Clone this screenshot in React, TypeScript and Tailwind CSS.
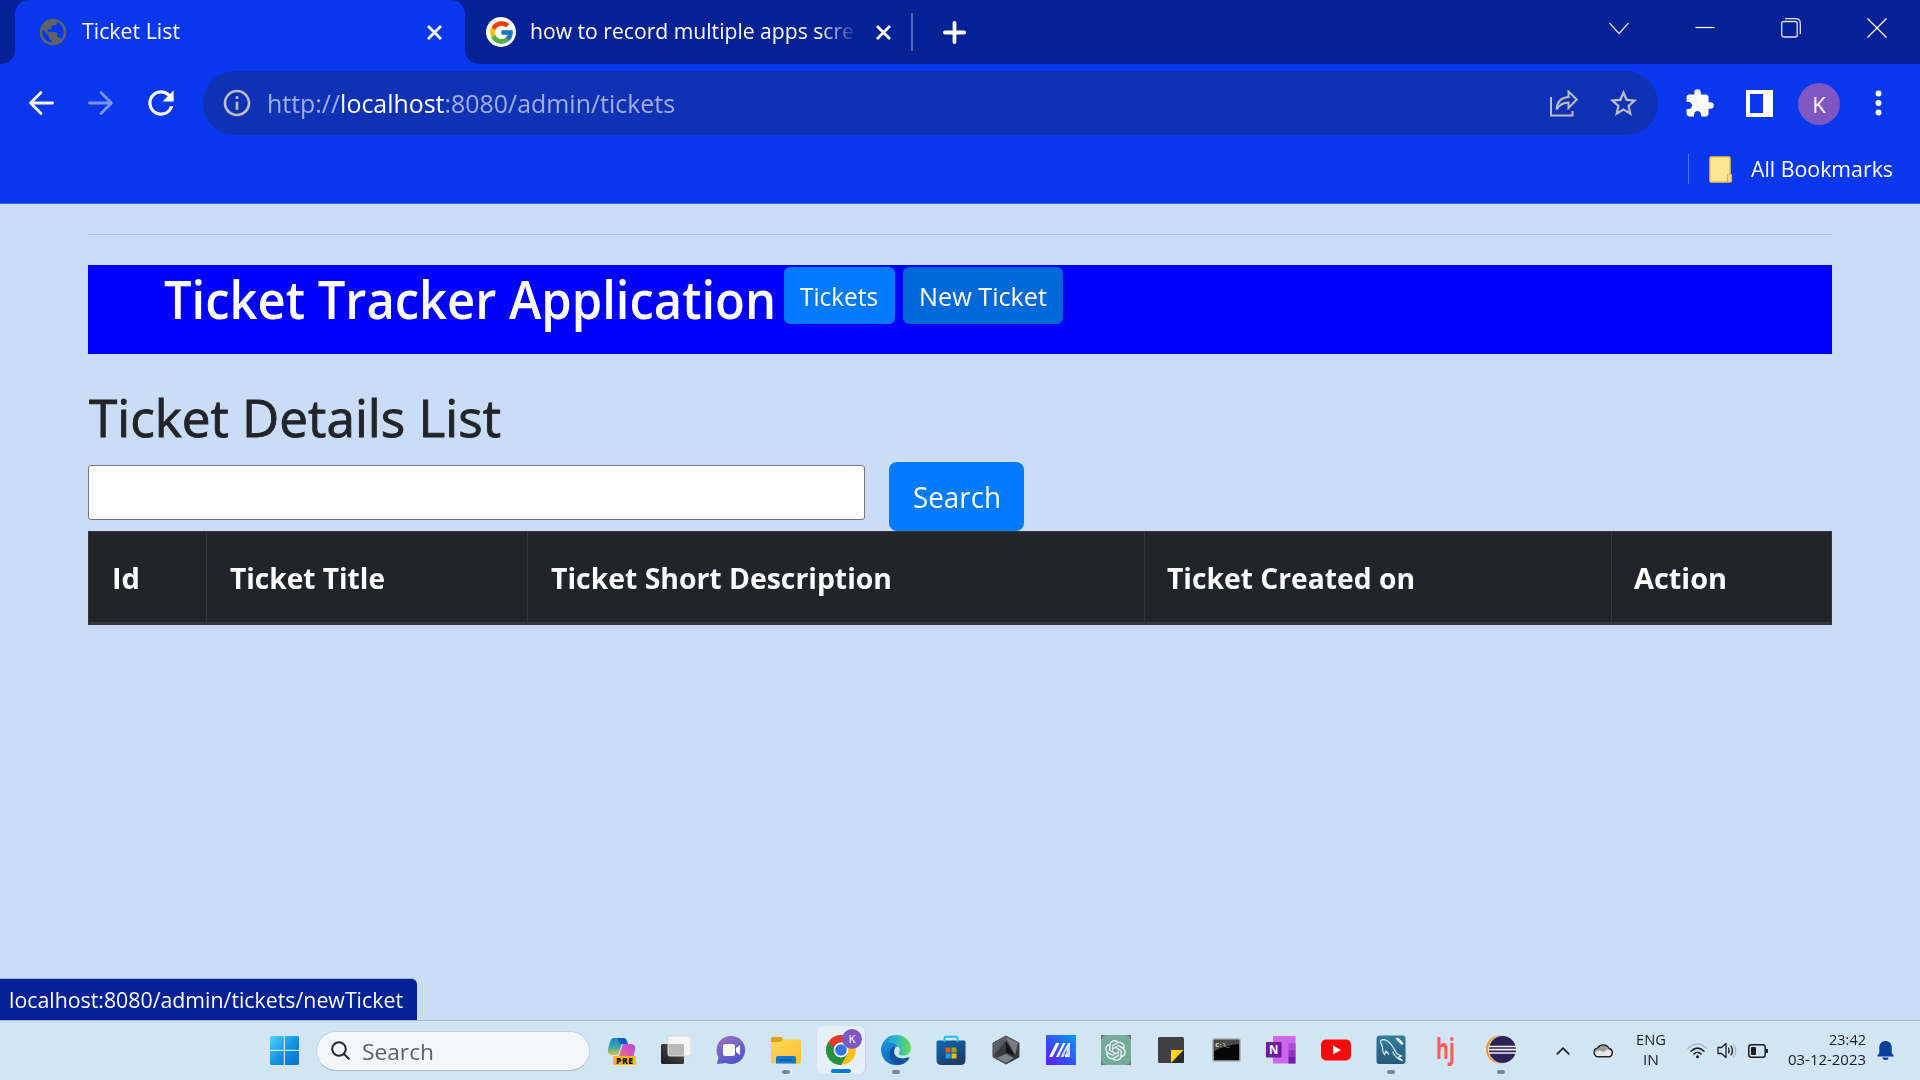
import { useLayoutEffect, useRef, type ReactNode } from "react";
import { MdExtension, MdOutlineInfo, MdPublic, MdRefresh, MdStarBorder } from "react-icons/md";
import { FcGoogle } from "react-icons/fc";
import { RiOpenaiFill } from "react-icons/ri";

/** A single line of text condensed or widened horizontally to fill `w` pixels. */
function Line({ w, className = "", children }: { w: number; className?: string; children: ReactNode }) {
  const ref = useRef<HTMLSpanElement>(null);
  useLayoutEffect(() => {
    const el = ref.current;
    if (!el) return;
    el.style.transform = "none";
    const natural = el.getBoundingClientRect().width;
    if (natural > 0) el.style.transform = `scaleX(${w / natural})`;
  }, [w]);
  return (
    <span className={`block shrink-0 whitespace-nowrap ${className}`} style={{ width: w }}>
      <span ref={ref} className="inline-block origin-left">
        {children}
      </span>
    </span>
  );
}

function CloseX() {
  return (
    <svg className="size-[15px] shrink-0" viewBox="0 0 15 15" stroke="#fff" strokeWidth="2.8">
      <path d="M1 1l13 13M14 1L1 14" />
    </svg>
  );
}

function TabStrip() {
  return (
    <div className="flex h-16 bg-[#0837ee] text-[22px] leading-[30px] text-white">
      <div className="w-[15px] rounded-br-[14px] bg-[#052196]" />
      <div className="w-[450px] bg-[#052196]">
        <div className="flex h-16 items-center rounded-t-[14px] bg-[#0837ee] pl-[22px]">
          <MdPublic className="size-8 text-[#5f6368]" />
          <Line w={98} className="-mt-[5px] ml-[13px]">Ticket List</Line>
          <div className="ml-[247px] flex"><CloseX /></div>
        </div>
      </div>
      <div className="flex flex-1 items-center rounded-bl-[14px] bg-[#052196] pl-[21px]">
        <div className="flex size-[30px] items-center justify-center rounded-full bg-white">
          <FcGoogle className="size-[27px]" />
        </div>
        <div className="-mt-[5px] ml-[14px] w-[325px] [mask-image:linear-gradient(to_right,#000_89%,transparent_101%)]">
          <Line w={324}>how to record multiple apps scre</Line>
        </div>
        <div className="ml-[21px] flex"><CloseX /></div>
        <div className="ml-5 h-[38px] w-0.5 bg-[#5468b8]" />
        <svg className="ml-[30px] size-[23px]" viewBox="0 0 22 22" stroke="#fff" strokeWidth="3.600" strokeLinecap="round">
          <path d="M11 1.800v18.400M1.800 11h18.400" />
        </svg>
        <div className="ml-auto flex h-full pb-[9px]">
          <div className="flex w-[86px] items-center justify-center">
            <svg className="size-5" viewBox="0 0 20 20" fill="none" stroke="#dfe4f5" strokeWidth="1.2"><path d="M.5 5l9.5 10.500L19.500 5" /></svg>
          </div>
          <div className="flex w-[86px] items-center justify-center">
            <svg className="size-5" viewBox="0 0 20 20" stroke="#fff" strokeWidth="1.2"><path d="M.5 9.500h19" /></svg>
          </div>
          <div className="flex w-[86px] items-center justify-center">
            <svg className="size-5" viewBox="0 0 20 20" fill="none" stroke="#dfe4f5" strokeWidth="1.3">
              <rect x=".7" y="3.500" width="15.500" height="15.500" rx="2" />
              <path d="M4 .7h10.500q4.800 0 4.800 4.800v10.500" />
            </svg>
          </div>
          <div className="flex w-[86px] items-center justify-center">
            <svg className="size-5" viewBox="0 0 20 20" stroke="#fff" strokeWidth="1.2"><path d="M.5.5l19 19M19.500.5l-19 19" /></svg>
          </div>
        </div>
      </div>
    </div>
  );
}

function Toolbar() {
  return (
    <div className="flex h-[78px] items-center bg-[#0837ee]">
      <svg className="ml-[28px] size-[26px]" viewBox="0 0 26 26" fill="none" stroke="#fff" strokeWidth="2.800" strokeLinecap="round" strokeLinejoin="round">
        <path d="M24.500 13H2.500M13 2.500L2.500 13 13 23.500" />
      </svg>
      <svg className="ml-[34px] size-[26px]" viewBox="0 0 26 26" fill="none" stroke="#7c93f6" strokeWidth="2.800" strokeLinecap="round" strokeLinejoin="round">
        <path d="M1.500 13h22M13 2.500L23.500 13 13 23.500" />
      </svg>
      <MdRefresh className="ml-7 size-[38px] text-white" />
      <div className="ml-[23px] flex h-16 w-[1455px] items-center rounded-full bg-[#0f32b4] pr-[18px] pl-[18px]">
        <MdOutlineInfo className="size-8 text-[#bcbdc2]" />
        <Line w={408} className="ml-3.5 text-[25px] leading-[34px] text-[#a0aee4]">
          http://<span className="text-white">localhost</span>:8080/admin/tickets
        </Line>
        <svg className="ml-auto h-[28px] w-[30px]" viewBox="0 0 30 28" fill="none" stroke="#bcbdc2" strokeWidth="2">
          <path d="M2 8v18.500h21.500V22" />
          <path d="M7.500 20.500C8 13 12 8.500 19.500 8V2.500l8.300 8-8.300 8.500v-5.500C14 13.500 10.500 15.500 7.500 20.500z" />
        </svg>
        <MdStarBorder className="ml-7 size-[33px] text-[#bcbdc2]" />
      </div>
      <MdExtension className="ml-[26px] size-[31px] text-white" />
      <svg className="ml-[31px] size-[27px]" viewBox="0 0 27 27"><path fill="#fff" fillRule="evenodd" d="M0 0h27v27H0zM4 4v19h13V4z" /></svg>
      <div className="mt-0.5 ml-[25px] flex size-[42px] items-center justify-center rounded-full bg-[#7e57c2] text-[22px] leading-none text-white">K</div>
      <svg className="ml-[35px] h-[26px] w-[7px]" viewBox="0 0 7 26" fill="#fff">
        <circle cx="3.500" cy="3.500" r="3" /><circle cx="3.500" cy="13" r="3" /><circle cx="3.500" cy="22.500" r="3" />
      </svg>
    </div>
  );
}

function BookmarksBar() {
  return (
    <div className="flex h-[62px] items-center justify-end border-b border-[#3c63f2] bg-[#0837ee] pr-[27px] pb-[7px]">
      <div className="h-[30px] w-px bg-[#5274f4]" />
      <svg className="ml-5 h-[27px] w-6" viewBox="0 0 24 27">
        <rect x="1" y="1" width="20" height="25" rx="1" fill="#ffe694" stroke="#f6c842" strokeWidth="1.500" />
        <rect x="18.500" y="18" width="4" height="8" rx="1" fill="#ffe082" stroke="#e5b32c" strokeWidth="1.200" />
      </svg>
      <Line w={142} className="-mt-0.5 ml-[18px] text-[22px] leading-[30px] text-white">All Bookmarks</Line>
    </div>
  );
}

function TicketsPage() {
  const th = "border-l border-[#32383e] first:border-l-0";
  return (
    <main className="flex-1 bg-[#cbdcf6] px-[88px] pt-[30px] text-[#212529]">
      <hr className="h-0 border-0 border-t border-[#b2c2e0]" />
      <div className="mt-[30px] flex h-[89px] items-start bg-[#0000ff] pl-[76px] text-white">
        <Line w={612} className="pt-0.5 text-[53px] leading-[64px] font-semibold">Ticket Tracker Application</Line>
        <button className="mt-0.5 ml-2 flex h-[57px] w-[111px] justify-center rounded-md bg-[#007bff] pt-[11px] pr-px text-[25px] leading-[36px]">
          <Line w={78}>Tickets</Line>
        </button>
        <button className="mt-0.5 ml-2 flex h-[57px] w-[160px] justify-center rounded-md border border-[#0062cc] bg-[#0069d9] pt-[10px] pr-0.5 text-[25px] leading-[36px]">
          <Line w={128}>New Ticket</Line>
        </button>
      </div>
      <h1 className="mt-[31px] h-[77px]">
        <Line w={412} className="ml-px text-[52px] leading-[64px] [-webkit-text-stroke:0.9px_#212529]">Ticket Details List</Line>
      </h1>
      <div className="flex h-[69px] items-start">
        <input className="mt-[3px] h-[55px] w-[777px] rounded-[3px] border border-[#767676] bg-white" />
        <button className="ml-6 flex h-[69px] w-[135px] justify-center rounded-lg bg-[#007bff] pt-[15px] text-[29px] leading-[40px] text-white">
          <Line w={88}>Search</Line>
        </button>
      </div>
      <table className="h-[94px] w-[1744px] table-fixed border-separate border-spacing-0 border border-b-[3px] border-[#32383e] bg-[#212529] text-left text-[28.5px] leading-[40px] text-white">
        <thead>
          <tr>
            <th className={`w-[117px] pt-0.5 pl-[23px] ${th}`}><Line w={28}>Id</Line></th>
            <th className={`w-[321px] pt-0.5 pl-[23px] ${th}`}><Line w={155}>Ticket Title</Line></th>
            <th className={`w-[617px] pt-0.5 pl-[23px] ${th}`}><Line w={341}>Ticket Short Description</Line></th>
            <th className={`w-[467px] pt-0.5 pl-[22px] ${th}`}><Line w={248}>Ticket Created on</Line></th>
            <th className={`pt-0.5 pl-[22px] ${th}`}><Line w={93}>Action</Line></th>
          </tr>
        </thead>
      </table>
    </main>
  );
}

function Copilot() {
  return (
    <svg className="size-[30px]" viewBox="0 0 30 30">
      <defs>
        <linearGradient id="cpA" x1="0" y1="0" x2="0" y2="1"><stop stopColor="#1589c9" /><stop offset=".5" stopColor="#35a5ad" /><stop offset="1" stopColor="#d6c848" /></linearGradient>
        <linearGradient id="cpB" x1="1" y1="0" x2="0" y2="1"><stop stopColor="#a44bea" /><stop offset=".5" stopColor="#d656b6" /><stop offset="1" stopColor="#f58a4b" /></linearGradient>
      </defs>
      <path d="M8 3h10l-6 17H6q-5 0-4-6l2-7q1-4 4-4z" fill="url(#cpA)" />
      <path d="M11 3h7q2 0 3 3l1 3h-6q-3 0-3-2z" fill="#1757c9" />
      <path d="M17 9h8q5 0 4 6l-2 9H12z" fill="url(#cpB)" />
      <rect x="7" y="21" width="23" height="9" rx="1.500" fill="#fdb90b" />
      <text x="10" y="28.500" fontSize="8.500" fontWeight="800" fontFamily="Open Sans, sans-serif" fill="#111" textLength="17">PRE</text>
    </svg>
  );
}

function TaskView() {
  return (
    <svg className="size-[30px]" viewBox="0 0 30 30">
      <defs><linearGradient id="tvA" x1="1" y1="0" x2="0" y2="1"><stop stopColor="#555" /><stop offset="1" stopColor="#1c1c1c" /></linearGradient></defs>
      <rect x="0" y="9" width="23" height="20" rx="1.500" fill="url(#tvA)" />
      <rect x="7" y="1" width="23" height="20" rx="1.500" fill="#f5f5f5" stroke="#d7d7d7" />
      <path d="M7.500 9H23v11.500H7.500z" fill="#b9b9b9" />
    </svg>
  );
}

function Chat() {
  return (
    <svg className="size-[30px]" viewBox="0 0 30 30">
      <defs><linearGradient id="chA" x1="0" y1="0" x2=".4" y2="1"><stop stopColor="#a070b4" /><stop offset=".5" stopColor="#7466cc" /><stop offset="1" stopColor="#5257c6" /></linearGradient></defs>
      <path d="M15 1a14 14 0 1 1-5 27L1 29l1.500-7A14 14 0 0 1 15 1z" fill="url(#chA)" />
      <rect x="7" y="9" width="12" height="12" rx="2" fill="#fff" />
      <path d="M20 13l4-3v10l-4-3z" fill="#fff" />
    </svg>
  );
}

function Folder() {
  return (
    <svg className="size-[30px]" viewBox="0 0 30 30">
      <defs><linearGradient id="foA" x1="0" y1="0" x2="1" y2="1"><stop stopColor="#ffd75e" /><stop offset="1" stopColor="#fdc02f" /></linearGradient></defs>
      <path d="M0 3.500Q0 2 1.500 2H10l3 3h15.500L30 7v4H0z" fill="#e09f11" />
      <path d="M0 7h9l3-2.500h16.500Q30 4.500 30 6v21q0 1.500-1.500 1.500h-27Q0 28.500 0 27z" fill="url(#foA)" />
      <path d="M5 28.500V23q0-2 2-2h16q2 0 2 2v5.500z" fill="#0f78d0" />
      <path d="M9 25h12" stroke="#0a4e96" strokeWidth="1.200" />
    </svg>
  );
}

function Chrome() {
  return (
    <svg className="h-[36px] w-[37px] overflow-visible" viewBox="0 0 37 36">
      <g transform="translate(0 6)">
        <circle cx="15" cy="15" r="15" fill="#fbc116" />
        <path d="M15 15L2 7.500A15 15 0 0 0 15 30l6.500-11.250z" fill="#229342" />
        <path d="M2 7.500A15 15 0 0 1 28 7.500H15L8.500 18.750z" fill="#e33b2e" />
        <path d="M2 7.500L8.500 18.750 12 16z" fill="#229342" />
        <circle cx="15" cy="15" r="7.400" fill="#fff" />
        <circle cx="15" cy="15" r="5.800" fill="#2f74e8" />
      </g>
      <circle cx="26" cy="10" r="10" fill="#7e57c2" />
      <text x="26" y="14" textAnchor="middle" fontSize="11" fill="#e4dcf3" fontFamily="Open Sans, sans-serif" fontWeight="600">K</text>
    </svg>
  );
}

function Edge() {
  return (
    <svg className="size-[30px]" viewBox="0 0 30 30">
      <defs>
        <linearGradient id="edA" x1="0" y1=".3" x2="1" y2=".3"><stop stopColor="#1c84d4" /><stop offset=".45" stopColor="#28b0d4" /><stop offset="1" stopColor="#68df52" /></linearGradient>
        <linearGradient id="edB" x1="0" y1="0" x2=".7" y2="1"><stop stopColor="#1793dc" /><stop offset="1" stopColor="#0d62b8" /></linearGradient>
      </defs>
      <path d="M0 14C1 6 7 0 15 0c9 0 15 6.500 15 13 0 5-4 7.500-8 7.500-3 0-5-1-4-2.500 2-3 .5-7-4-7.500C8 10 1 10 0 14z" fill="url(#edA)" />
      <path d="M0 14c1-5 5-7 10-6 4 .7 7 3 7 4-4-1-7 2-7 6 0 6 5 10 11 10-2 1.500-4 2-6 2C6 30 0 23 0 14z" fill="url(#edB)" />
      <path d="M12 12c-5 4-5 13 3 17.500C21 31 26 27.500 28.300 23c.4-.8-.3-1-1-.7-6 2.500-13 .7-14-4.300-.5-2.500.3-4.500 1.500-6z" fill="#14539f" />
    </svg>
  );
}

function Store() {
  return (
    <svg className="size-[30px]" viewBox="0 0 30 30">
      <defs><linearGradient id="stA" x1="0" y1="0" x2=".6" y2="1"><stop stopColor="#0d68b4" /><stop offset="1" stopColor="#213a68" /></linearGradient></defs>
      <path d="M.5 7Q.5 5.500 2 5.500h26q1.500 0 1.500 1.500v18q0 5-5 5h-19q-5 0-5-5z" fill="url(#stA)" />
      <path d="M8.500 7V3q0-1.300 1.300-1.300h10.400q1.300 0 1.300 1.300v4" fill="none" stroke="#2abcf0" strokeWidth="2" />
      <rect x="9.500" y="12.500" width="5" height="5" fill="#f1511b" /><rect x="15.500" y="12.500" width="5" height="5" fill="#80bb03" />
      <rect x="9.500" y="18.500" width="5" height="5" fill="#12a4ee" /><rect x="15.500" y="18.500" width="5" height="5" fill="#fcb908" />
    </svg>
  );
}

function ArmouryCrate() {
  return (
    <svg className="size-[30px]" viewBox="0 0 30 30">
      <defs><linearGradient id="acA" x1="0" y1="0" x2="1" y2="1"><stop stopColor="#6c7278" /><stop offset="1" stopColor="#24282c" /></linearGradient></defs>
      <path d="M15 1l13 7v14l-13 7-13-7V8z" fill="url(#acA)" stroke="#41474c" />
      <path d="M15 6l9 15-9-3.500L6 22z" fill="#15181b" />
      <path d="M15 6L3 20l3 3 9-6z" fill="#363b40" />
      <path d="M15 2l12 6-3 12z" fill="#8d9499" opacity=".7" />
      <path d="M6 23l9-4 8 4-8 5z" fill="#7b8288" />
    </svg>
  );
}

function MyAsus() {
  return (
    <svg className="size-[30px]" viewBox="0 0 30 30">
      <defs><linearGradient id="maA" x1="1" y1="0" x2="0" y2="1"><stop stopColor="#079bff" /><stop offset=".6" stopColor="#3b49fb" /><stop offset="1" stopColor="#6a17f5" /></linearGradient></defs>
      <path d="M0 0h30v30H0z" fill="url(#maA)" />
      <path d="M3 22L10 8h3.500l-7 14zM10 22l7-14h2.500l-7 14z" fill="#fff" />
      <path d="M14.500 22l7.500-14h2v14h-3.500v-8L17.500 22z" fill="#d6dcff" />
      <circle cx="20.500" cy="20.500" r="1.700" fill="#fff" />
    </svg>
  );
}

function ChatGpt() {
  return (
    <div className="flex size-[30px] items-center justify-center bg-[#77736f]">
      <div className="flex size-[30px] items-center justify-center rounded-md bg-[#74a99b]"><RiOpenaiFill className="size-[25px] text-[#eef6f3]" /></div>
    </div>
  );
}

function StickyNotes() {
  return (
    <svg className="size-[30px]" viewBox="0 0 30 30">
      <path d="M2 3.500Q2 2 3.500 2h23Q28 2 28 3.500V28H3.500Q2 28 2 26.500z" fill="#414141" />
      <path d="M15 28V15h13v11.500q0 1.500-1.500 1.500z" fill="#2b2b2b" /><path d="M15 28V15h12.500z" fill="#ffd60a" />
    </svg>
  );
}

function Terminal() {
  return (
    <svg className="size-[30px]" viewBox="0 0 30 30">
      <rect x="2" y="4" width="27" height="22" rx="1" fill="#070707" stroke="#a9adb0" strokeWidth="1.500" />
      <path d="M3 5h25v4Q15 10 3 16z" fill="#4b4b4b" />
      <text x="4.500" y="12" fontSize="6" fontWeight="700" fill="#e8e8e8" fontFamily="Liberation Mono, monospace">C:\_</text>
    </svg>
  );
}

function OneNote() {
  return (
    <svg className="size-[30px]" viewBox="0 0 30 30">
      <path d="M7 1h22.500v27.500H7z" fill="#cb67e8" />
      <path d="M22.500 8H29.500v7h-7z" fill="#ae4bd5" /><path d="M22.500 15H29.500v7h-7z" fill="#9332bf" /><path d="M22.500 22H29.500v6.500h-7z" fill="#7719aa" />
      <rect x="0" y="7" width="15.500" height="15.500" rx="1" fill="#6f1aa3" />
      <text x="7.700" y="18.800" textAnchor="middle" fontSize="11.500" fontWeight="700" fill="#fff" fontFamily="Open Sans, sans-serif">N</text>
    </svg>
  );
}

function YouTube() {
  return (
    <svg className="size-[30px]" viewBox="0 0 30 30">
      <rect x="0" y="4.500" width="30" height="21" rx="5" fill="#f90a0a" /><path d="M12 10.500l8 4.500-8 4.500z" fill="#fff" />
    </svg>
  );
}

function Workbench() {
  return (
    <svg className="size-[30px]" viewBox="0 0 30 30">
      <defs><linearGradient id="wbA" x1="0" y1="0" x2="0" y2="1"><stop stopColor="#347ba0" /><stop offset="1" stopColor="#255a78" /></linearGradient></defs>
      <rect x=".5" y=".5" width="29" height="28.500" rx="3" fill="url(#wbA)" />
      <path d="M4.500 5.500C9 3 14 7 17 12c1.500 3 3 6 5 7.500l3.500 1.500-3 1 3.500 3.500c-5-1-8-6-9.500-9M4.500 5.500c0 3 2 5 2 8s1 5 2 6l1.500-3.500 3 3.500" fill="none" stroke="#e1ebf0" strokeWidth="1.200" />
      <path d="M21.500 4l4.500 4.500" stroke="#fff" strokeWidth="2.500" strokeLinecap="round" />
    </svg>
  );
}

function Hj() {
  return (
    <svg className="size-[30px] overflow-visible" viewBox="0 0 30 30">
      <text x="5" y="23.500" fontSize="29" fontWeight="700" fill="#fb5b60" fontFamily="Open Sans, sans-serif" textLength="19" lengthAdjust="spacingAndGlyphs">hj</text>
    </svg>
  );
}

function Eclipse() {
  return (
    <svg className="size-[30px]" viewBox="0 0 30 30">
      <circle cx="14" cy="14.500" r="14" fill="#f7941e" /><circle cx="16.200" cy="14.500" r="14" fill="#d2e5f3" /><circle cx="16.500" cy="14.500" r="13.500" fill="#2c2255" />
      <path d="M3 11.500h27M2.500 14.700h27.500M3 18h27" stroke="#f1eff7" strokeWidth="1.700" />
    </svg>
  );
}

const apps: { name: string; icon: ReactNode; running?: boolean; active?: boolean }[] = [
  { name: "Copilot", icon: <Copilot /> },
  { name: "Task View", icon: <TaskView /> },
  { name: "Chat", icon: <Chat /> },
  { name: "File Explorer", icon: <Folder />, running: true },
  { name: "Chrome", icon: <Chrome />, active: true },
  { name: "Edge", icon: <Edge />, running: true },
  { name: "Store", icon: <Store /> },
  { name: "Armoury Crate", icon: <ArmouryCrate /> },
  { name: "MyASUS", icon: <MyAsus /> },
  { name: "ChatGPT", icon: <ChatGpt /> },
  { name: "Sticky Notes", icon: <StickyNotes /> },
  { name: "Terminal", icon: <Terminal /> },
  { name: "OneNote", icon: <OneNote /> },
  { name: "YouTube", icon: <YouTube /> },
  { name: "Workbench", icon: <Workbench />, running: true },
  { name: "Hotjar", icon: <Hj /> },
  { name: "Eclipse", icon: <Eclipse />, running: true },
];

function Taskbar() {
  return (
    <footer className="flex h-[60px] items-center border-t border-[#a8b5c6] bg-[#d2e5f3] pl-[270px] text-[#1b1f24]">
      <svg className="size-[29px]" viewBox="0 0 29 29">
        <defs><linearGradient id="winA" gradientUnits="userSpaceOnUse" x1="0" y1="0" x2="29" y2="29"><stop stopColor="#4fd2ff" /><stop offset=".55" stopColor="#1290e0" /><stop offset="1" stopColor="#0571cf" /></linearGradient></defs>
        <path fill="url(#winA)" d="M1 0h12.800v13.800H0V1zM15 0h13l1 1v12.800H15zM0 15h13.800v14H1l-1-1zM15 15h14v13l-1 1H15z" />
      </svg>
      <div className="ml-[17px] flex h-[40px] w-[274px] items-center rounded-full border border-[#c3d3e3] border-b-[#a9bac9] bg-[#f2f7fb] pl-[14px]">
        <svg className="size-[19px]" viewBox="0 0 19 19" fill="none" stroke="#24282c" strokeWidth="2" strokeLinecap="round"><circle cx="8" cy="8" r="6.800" /><path d="M13 13l4.800 4.800" /></svg>
        <Line w={72} className="ml-[12px] text-[22px] leading-[30px] text-[#5d6064]">Search</Line>
      </div>
      <div className="ml-[3px] flex h-full">
        {apps.map((app) => (
          <div key={app.name} title={app.name} className="flex h-full w-[55px] flex-col items-center">
            {app.active ? (
              <div className="mt-[5px] flex h-12 w-12 flex-col items-center rounded-md border border-[#e4edf5] bg-[#e6f0f9] shadow-[1px_0_0_#c4d6e6]">
                <div className="mt-[2px] ml-[7px] h-[36px]">{app.icon}</div>
                <div className="mt-[4px] h-1 w-5 rounded-full bg-[#0a78d6]" />
              </div>
            ) : (
              <>
                <div className="mt-[14px] flex size-[30px]">{app.icon}</div>
                {app.running && <div className="mt-[5px] h-1 w-2 rounded-full bg-[#7c868e]" />}
              </>
            )}
          </div>
        ))}
      </div>
      <svg className="ml-[28px] h-[8px] w-[14px]" viewBox="0 0 14 8" fill="none" stroke="#1b1f24" strokeWidth="1.700"><path d="M.8 7.300L7 1.200l6.200 6.100" /></svg>
      <svg className="ml-[23px] h-[15px] w-[21px]" viewBox="0 0 21 15">
        <path d="M5.500 13.800a4.500 4.500 0 0 1-.8-8.900 6.500 6.500 0 0 1 11.300.6 4.300 4.300 0 0 1 .3 8.300z" fill="#e6e6e6" />
        <path d="M1.800 9Q2 5.500 5 5q4.500-6.500 10.500.5l-5 3.500q-4-3-8.700 0z" fill="#9b9b9b" />
        <path d="M5.500 13.800a4.500 4.500 0 0 1-.8-8.900 6.500 6.500 0 0 1 11.300.6 4.300 4.300 0 0 1 .3 8.300z" fill="none" stroke="#222" strokeWidth="1.400" />
      </svg>
      <div className="-mt-[3px] ml-[22px] flex flex-col items-center text-[15px] leading-5">
        <Line w={30}>ENG</Line>
        <Line w={16}>IN</Line>
      </div>
      <svg className="ml-[21px] h-[16px] w-[21px]" viewBox="0 0 21 16" fill="none" stroke="#1b1f24" strokeWidth="1.500" strokeLinecap="round">
        <path d="M1 5.500Q10.500-3.500 20 5.500" stroke="#aab9c5" /><path d="M4 8.300Q10.500 2 17 8.300M6.800 11Q10.500 7.500 14.200 11" /><circle cx="10.500" cy="13.700" r="1.500" fill="#1b1f24" stroke="none" />
      </svg>
      <svg className="ml-[9px] h-[17px] w-[20px]" viewBox="0 0 20 17" fill="none" stroke="#1b1f24" strokeWidth="1.300" strokeLinecap="round" strokeLinejoin="round">
        <path d="M1 5.500h3.500L9 1.500v14l-4.500-4H1zM11.500 6q1.500 2.500 0 5M14 4q3 4.500 0 9" /><path d="M16.500 2q4.500 6.500 0 13" stroke="#aab9c5" />
      </svg>
      <svg className="ml-[11px] h-[14px] w-[20px]" viewBox="0 0 20 14"><rect x=".8" y=".8" width="16.400" height="12.400" rx="2.500" fill="none" stroke="#1b1f24" strokeWidth="1.500" /><rect x="3" y="3" width="5" height="8" rx=".8" fill="#1b1f24" /><path d="M18 5h2v4h-2z" fill="#1b1f24" /></svg>
      <div className="-mt-[4px] ml-[20px] flex flex-col items-end text-[15px] leading-5">
        <Line w={37}>23:42</Line>
        <Line w={78}>03-12-2023</Line>
      </div>
      <svg className="ml-[11px] h-[19px] w-[17px]" viewBox="0 0 17 19" fill="#08419b"><path d="M8.500 0a6 6 0 0 1 6.200 6.500V12l2 2.800v.7H.3v-.7l2-2.800V6.500A6 6 0 0 1 8.500 0zM5.500 16.500h6a3 2.500 0 0 1-6 0z" /></svg>
    </footer>
  );
}

export default function App() {
  return (
    <div className="relative flex h-[1080px] w-[1920px] flex-col overflow-hidden font-['Open_Sans','Noto_Sans',sans-serif]">
      <TabStrip />
      <Toolbar />
      <BookmarksBar />
      <TicketsPage />
      <div className="absolute bottom-[60px] left-0 h-[42px] w-[417px] rounded-tr-md border-t border-[#9fb0dc] bg-[#052196] pt-[5px] pl-[9px] text-[22px] leading-[30px] text-white">
        <Line w={394}>localhost:8080/admin/tickets/newTicket</Line>
      </div>
      <Taskbar />
    </div>
  );
}
